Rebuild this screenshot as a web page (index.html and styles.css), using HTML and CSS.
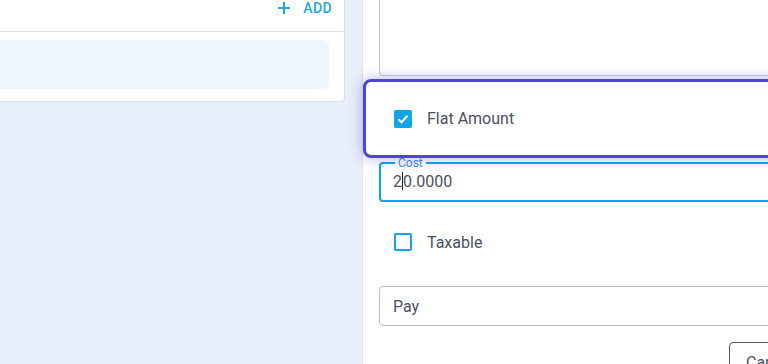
FILE: index.html
```html
<!DOCTYPE html>
<html lang="en">

<head>
  <meta charset="UTF-8">
  <meta name="viewport" content="width=device-width, initial-scale=1.0">
  <title>Charges</title>
  <link rel="stylesheet" href="styles.css">
</head>

<body>
  <div class="layout">
    <div class="left-side">
      <div class="card">
        <div class="card-header">
          <button class="add-btn" type="button">
            <svg width="14" height="14" viewBox="0 0 14 14"><path d="M7 1v12M1 7h12" stroke="#1ea7e6" stroke-width="2" fill="none"/></svg>
            <span>Add</span>
          </button>
        </div>
        <div class="card-body">
          <div class="empty-box"></div>
        </div>
      </div>
    </div>

    <div class="panel">
      <div class="textarea"></div>

      <div class="flat-card">
        <span class="check checked">
          <svg width="12" height="10" viewBox="0 0 12 10"><path d="M1.5 5.2l3 3 6-6.5" stroke="#fff" stroke-width="2" fill="none"/></svg>
        </span>
        <span class="check-label">Flat Amount</span>
      </div>

      <fieldset class="cost-field">
        <legend>Cost</legend>
        <div class="cost-value">2<span class="caret"></span>0.0000</div>
      </fieldset>

      <div class="check-row">
        <span class="check"></span>
        <span class="check-label">Taxable</span>
      </div>

      <div class="select">Pay</div>

      <div class="actions">
        <button class="btn" type="button">Cancel</button>
      </div>
    </div>
  </div>
</body>

</html>
```

FILE: styles.css
```css
body {
  margin: 0;
  padding: 0;
  width: 768px;
  height: 364px;
  overflow: hidden;
  background-color: #e8eff8;
  font-family: Roboto, "Liberation Sans", sans-serif;
  color: #4b5060;
}

.layout {
  display: flex;
  align-items: flex-start;
}

.left-side {
  width: 362px;
  flex: none;
}

.card {
  width: 345px;
  margin-top: -16px;
  background-color: #fff;
  border-right: 1px solid #dcdfe3;
  border-bottom: 1px solid #dcdfe3;
  border-bottom-right-radius: 4px;
  box-sizing: border-box;
}

.card-header {
  height: 48px;
  display: flex;
  justify-content: flex-end;
  align-items: center;
  padding-right: 12px;
  border-bottom: 1px solid #dcdfe3;
  box-sizing: border-box;
}

.add-btn {
  display: flex;
  align-items: center;
  gap: 12px;
  background: none;
  border: none;
  padding: 0;
  font-family: Roboto, "Liberation Sans", sans-serif;
  font-size: 14px;
  font-weight: 500;
  letter-spacing: 0.4px;
  text-transform: uppercase;
  color: #1ea7e6;
  cursor: pointer;
}

.card-body {
  padding: 8px 15px 12px 0;
}

.empty-box {
  height: 49px;
  background-color: #eff6fd;
  border-radius: 0 6px 6px 0;
}

.panel {
  width: 520px;
  flex: none;
  height: 400px;
  background-color: #fff;
  border-left: 1px solid #dfe3e8;
  padding: 0 0 0 16px;
  box-sizing: border-box;
}

.textarea {
  height: 100px;
  margin-top: -24px;
  border: 1px solid #c4c4c4;
  border-radius: 4px;
  box-sizing: border-box;
}

.flat-card {
  height: 79px;
  margin: 3px 0 0 -16px;
  padding-left: 28px;
  display: flex;
  align-items: center;
  gap: 15px;
  border: 3px solid #5043da;
  border-radius: 8px;
  background-color: #fff;
  box-shadow: 0 0 14px rgba(90, 75, 230, 0.45);
  box-sizing: border-box;
  position: relative;
}

.check {
  width: 18px;
  height: 18px;
  flex: none;
  border: 2px solid #0ea5e9;
  border-radius: 2px;
  box-sizing: border-box;
  display: flex;
  align-items: center;
  justify-content: center;
}

.check.checked {
  background-color: #0ea5e9;
}

.check-label {
  font-size: 16px;
  color: #4b5060;
}

.cost-field {
  margin: 0;
  padding: 0 12px 6px;
  height: 44px;
  border: 2px solid #0ea5e9;
  border-radius: 4px;
  box-sizing: border-box;
}

.cost-field legend {
  margin-left: 2px;
  padding: 0 3px;
  font-size: 12px;
  line-height: 10px;
  color: #3b8be6;
}

.cost-value {
  font-size: 16px;
  line-height: 20px;
  margin-top: 4px;
  color: #4b5060;
}

.caret {
  display: inline-block;
  width: 1px;
  height: 18px;
  vertical-align: -3px;
  background-color: #222;
}

.check-row {
  display: flex;
  align-items: center;
  gap: 15px;
  height: 46px;
  margin-top: 17px;
  padding-left: 15px;
}

.select {
  height: 40px;
  margin-top: 21px;
  padding-left: 13px;
  display: flex;
  align-items: center;
  font-size: 16px;
  color: #4b5060;
  border: 1px solid #bdbdbd;
  border-radius: 4px;
  box-sizing: border-box;
}

.actions {
  display: flex;
  margin-top: 16px;
  padding-left: 350px;
}

.btn {
  height: 40px;
  padding: 0 16px;
  font-family: Roboto, "Liberation Sans", sans-serif;
  font-size: 16px;
  color: #4b5060;
  background: #fff;
  border: 1px solid #555a66;
  border-radius: 4px;
}
```
